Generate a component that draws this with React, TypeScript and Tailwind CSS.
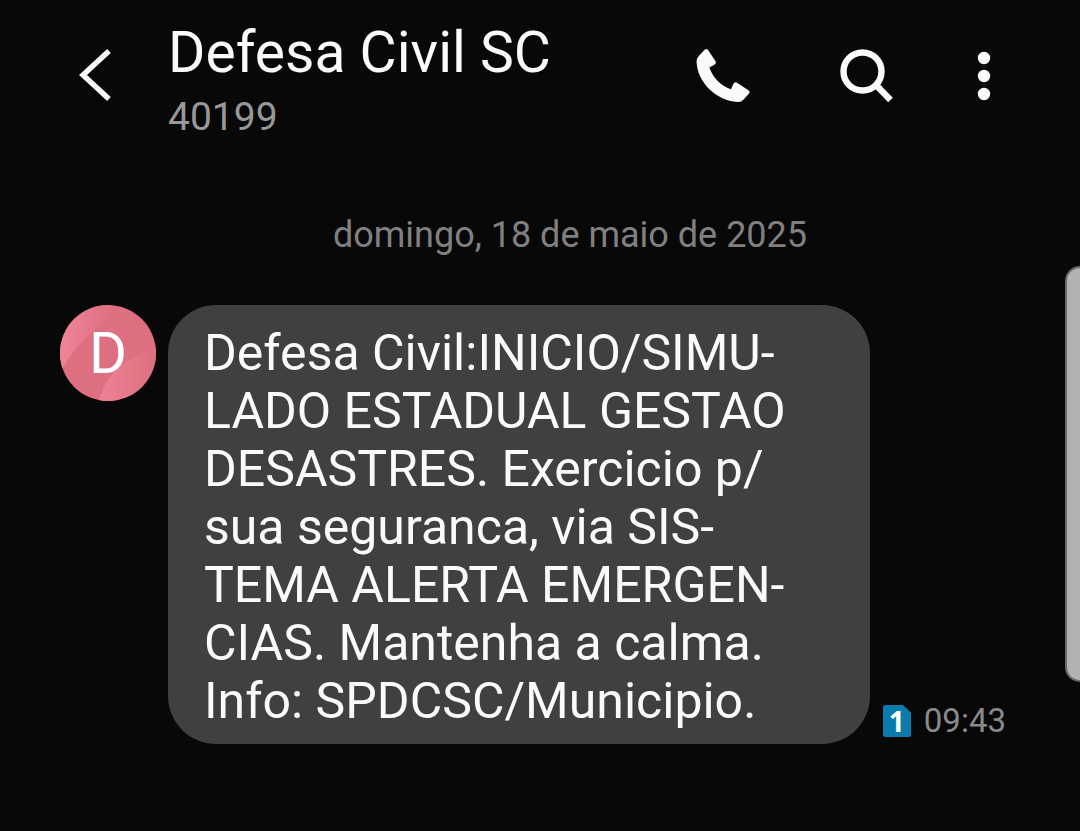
const messageLines = [
  "Defesa Civil:INICIO/SIMU-",
  "LADO ESTADUAL GESTAO",
  "DESASTRES. Exercicio p/",
  "sua seguranca, via SIS-",
  "TEMA ALERTA EMERGEN-",
  "CIAS. Mantenha a calma.",
  "Info: SPDCSC/Municipio.",
];

function BackIcon() {
  return (
    <svg width="34" height="56" viewBox="0 0 34 56" fill="none" aria-hidden="true">
      <path d="M31 4 5 28l26 24" stroke="currentColor" strokeWidth="5.4" />
    </svg>
  );
}

function PhoneIcon() {
  return (
    <svg width="54" height="54" viewBox="0 0 54 54" fill="currentColor" aria-hidden="true">
      <path d="M8.6.8Q10.6-.8 12.2 1.2L19.4 12Q20.6 14.2 18.8 15.4L13.4 18.6C16.6 28.4 24.6 37 35 40.3L37.4 34.8Q38.6 32.4 41 33.7L52.4 41.2Q54.6 42.8 52.8 44.8L47.6 50.4Q45.2 53.2 41.6 53C19.6 51.4 1.6 33 .6 13.2Q.4 9.6 2.8 7Z" />
    </svg>
  );
}

function SearchIcon() {
  return (
    <svg width="54" height="54" viewBox="0 0 54 54" fill="none" stroke="currentColor" aria-hidden="true">
      <circle cx="22.5" cy="22.5" r="19" strokeWidth="6.4" />
      <path d="M36 36 50.5 51" strokeWidth="6.4" />
    </svg>
  );
}

function MoreIcon() {
  return (
    <svg width="14" height="50" viewBox="0 0 14 50" fill="currentColor" aria-hidden="true">
      <circle cx="7" cy="7" r="6.2" />
      <circle cx="7" cy="25" r="6.2" />
      <circle cx="7" cy="43" r="6.2" />
    </svg>
  );
}

function Avatar() {
  return (
    <div className="relative flex size-24 shrink-0 items-center justify-center overflow-hidden rounded-full bg-[#dd6f80]">
      <svg className="absolute inset-0" width="96" height="96" viewBox="0 0 96 96" aria-hidden="true">
        <defs>
          <linearGradient id="shine-left" x1="0" x2="0.9">
            <stop offset="0" stopColor="#f08598" />
            <stop offset="1" stopColor="#dd6f80" />
          </linearGradient>
          <linearGradient id="shine-right" x1="0" x2="1">
            <stop offset="0" stopColor="#ee8294" />
            <stop offset="1" stopColor="#dd6f80" />
          </linearGradient>
        </defs>
        <path d="M0 68C14 42 30 26 58 8L50 0H0Z" fill="url(#shine-left)" />
        <path d="M39 96C46 68 64 54 96 42V96Z" fill="url(#shine-right)" />
      </svg>
      <span className="relative text-[58px] leading-[64px] text-white">D</span>
    </div>
  );
}

function SimBadge() {
  return (
    <span className="relative flex h-8 w-7 items-center justify-center">
      <svg className="absolute inset-0" width="28" height="32" viewBox="0 0 28 32" aria-hidden="true">
        <path d="M2.500 0H20L28 7.500V29.500Q28 32 25.500 32H2.500Q0 32 0 29.500V2.500Q0 0 2.500 0Z" fill="#0b7aad" />
      </svg>
      <span className="relative font-['Open_Sans'] text-[28px] leading-8 font-bold text-white">1</span>
    </span>
  );
}

export default function App() {
  return (
    <div className="relative min-h-screen bg-[#080808] font-[Roboto,sans-serif] text-[#fafafa]">
      {/* Conversation header */}
      <header className="flex items-start pt-[21px] pr-[89px] pl-[78px]">
        <button type="button" aria-label="Voltar" className="mt-[26px]">
          <BackIcon />
        </button>
        <div className="ml-14 flex-1">
          <h1 className="text-[57px] leading-[64px]">Defesa Civil SC</h1>
          <p className="text-[39px] leading-[64px] text-[#989898]">40199</p>
        </div>
        <div className="mt-7 flex items-center">
          <button type="button" aria-label="Ligar">
            <PhoneIcon />
          </button>
          <button type="button" aria-label="Pesquisar" className="ml-[90px]">
            <SearchIcon />
          </button>
          <button type="button" aria-label="Mais opções" className="ml-[83px]">
            <MoreIcon />
          </button>
        </div>
      </header>

      <main className="pb-[86px] pl-[60px]">
        <p className="pt-[63px] text-center text-[36px] leading-[46px] text-[#808080]">
          domingo, 18 de maio de 2025
        </p>

        {/* Received message */}
        <div className="mt-[47px] flex items-start gap-3 pr-[74px]">
          <Avatar />
          <div className="flex flex-1 items-end gap-[13px]">
            <div className="flex-1 rounded-[48px] bg-[#404040] px-9 pt-[19px] pb-[14px]">
              <p className="text-[50px] leading-[58px]">
                {messageLines.map((line) => (
                  <span key={line} className="block whitespace-nowrap">
                    {line}
                  </span>
                ))}
              </p>
            </div>
            <div className="flex items-center gap-[13px] pb-[3px] text-[#8a8a8a]">
              <SimBadge />
              <time className="text-[33px] leading-10">09:43</time>
            </div>
          </div>
        </div>
      </main>

      {/* Edge panel handle */}
      <div className="absolute top-[266px] right-0 h-[416px] w-[15px] rounded-l-2xl border-2 border-r-0 border-[#6a6a6a] bg-[#b2b2b2]" />
    </div>
  );
}
